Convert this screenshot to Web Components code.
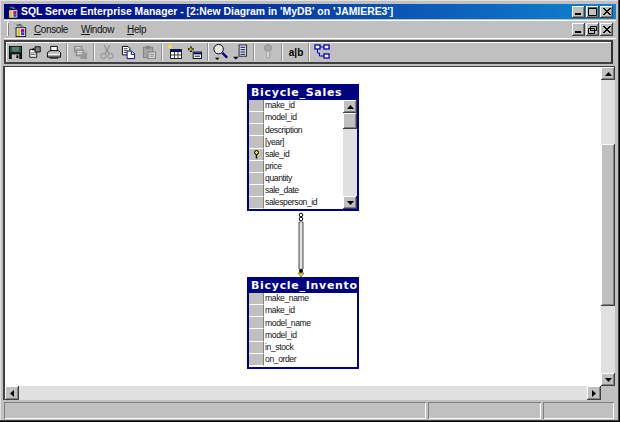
<!DOCTYPE html>
<html>
<head>
<meta charset="utf-8">
<title>SQL Server Enterprise Manager</title>
<style>
  html, body { margin: 0; padding: 0; background: #c0c0c0; }
  body { width: 620px; height: 422px; overflow: hidden; font-family: "Liberation Sans", Arial, sans-serif; }
</style>
</head>
<body>
<app-window>
  <title-bar>SQL Server Enterprise Manager - [2:New Diagram in 'MyDB' on 'JAMIERE3']</title-bar>
  <menu-bar></menu-bar>
  <tool-bar></tool-bar>
  <diagram-view>
    <db-table name="Bicycle_Sales" x="242" y="17" w="112" h="127" scroll>
      <db-col>make_id</db-col>
      <db-col>model_id</db-col>
      <db-col>description</db-col>
      <db-col>[year]</db-col>
      <db-col key>sale_id</db-col>
      <db-col>price</db-col>
      <db-col>quantity</db-col>
      <db-col>sale_date</db-col>
      <db-col>salesperson_id</db-col>
    </db-table>
    <db-table name="Bicycle_Inventory" x="242" y="210" w="112" h="92">
      <db-col>make_name</db-col>
      <db-col>make_id</db-col>
      <db-col>model_name</db-col>
      <db-col>model_id</db-col>
      <db-col>in_stock</db-col>
      <db-col>on_order</db-col>
    </db-table>
    <db-link x="289" y="144"></db-link>
  </diagram-view>
  <status-bar></status-bar>
</app-window>

<script>
// raised win9x button look, shared by scrollbars and caption buttons
const BEVEL = 'background:#c0c0c0;box-shadow:inset -1px -1px #404040,inset 1px 1px #fff,inset -2px -2px #808080;';

const ICONS = {
  app: `<svg width="14" height="15" viewBox="0 0 16 17"><path d="M1 1l4 2 3-1 3 2-2 1-2-1-2 1-1-2z" fill="#555"/><path d="M7 4l6 2" stroke="#888"/><rect x="3.500" y="6.500" width="11" height="10" fill="#fff" stroke="#000"/><rect x="5" y="8" width="3" height="8" fill="#e8c020"/><rect x="9" y="8" width="4" height="4" fill="#b00090"/><rect x="9" y="12" width="4" height="3" fill="#2040c0"/></svg>`,
  save: `<svg width="15" height="15" viewBox="0 0 16 16"><rect x="1" y="1" width="14" height="14" fill="#101010"/><rect x="2" y="2" width="12" height="6" fill="#105050"/><rect x="4" y="2" width="8" height="5" fill="#6a726a"/><rect x="4" y="10" width="8" height="5" fill="#c0c0c0"/><rect x="9" y="11" width="2" height="3" fill="#000"/></svg>`,
  props: `<svg width="14" height="14" viewBox="0 0 16 16"><path d="M2 5h8v9H2z" fill="#fff" stroke="#000"/><path d="M3 9h6M3 11h6" stroke="#555"/><path d="M8 2h6v6H8z" fill="#808080" stroke="#000"/><path d="M4 6l2-3 2 3z" fill="#000"/></svg>`,
  print: `<svg width="16" height="15" viewBox="0 0 17 16"><path d="M5 1.500h7v5H5z" fill="#fff" stroke="#000"/><path d="M1.500 8l3-2h9l2 2v5h-14z" fill="#c0c0c0" stroke="#000"/><path d="M2 10h13" stroke="#fff"/><path d="M2 12h13" stroke="#555"/><path d="M4 14h9" stroke="#000"/></svg>`,
  tables: `<svg width="16" height="15" viewBox="0 0 17 16"><g fill="#b0b0b0" stroke="#888"><rect x="1.500" y="1.500" width="8" height="6"/><rect x="3.500" y="5.500" width="8" height="6"/></g><rect x="8" y="8" width="7" height="7" fill="#989898"/><path d="M3 3h5M5 7h5M5 9h5" stroke="#e0e0e0"/></svg>`,
  cut: `<svg width="14" height="16" viewBox="0 0 14 16"><path d="M4 1l5 9M10 1L5 10" stroke="#909090" stroke-width="1.300" fill="none"/><circle cx="3.500" cy="12" r="2.500" fill="none" stroke="#a0a0a0" stroke-width="1.300"/><circle cx="10.500" cy="12" r="2.500" fill="none" stroke="#a0a0a0" stroke-width="1.300"/></svg>`,
  copy: `<svg width="15" height="15" viewBox="0 0 16 16"><path d="M1.500 1.500h6l2 2v7h-8z" fill="#fff" stroke="#000"/><path d="M3 4h4M3 6h4M3 8h3" stroke="#333"/><path d="M6.500 6.500h5l3 3v5h-8z" fill="#fff" stroke="#000080"/><path d="M11 7v3h3" fill="none" stroke="#000080"/></svg>`,
  paste: `<svg width="15" height="15" viewBox="0 0 16 16"><rect x="1.500" y="2.500" width="10" height="11" fill="#a4a4a4" stroke="#808080"/><rect x="4" y="1" width="5" height="3" fill="#808080"/><rect x="6.500" y="7.500" width="8" height="7" fill="#d8d8d8" stroke="#808080"/><path d="M8 10h5M8 12h5" stroke="#909090"/></svg>`,
  newtable: `<svg width="16" height="16" viewBox="0 0 16 16"><path d="M3 0v5M0.500 2.500h5M1 1l4 3M5 1L1 4" stroke="#f0e040"/><rect x="3.500" y="5.500" width="11" height="9" fill="#fff" stroke="#202020"/><rect x="4" y="6" width="10" height="2" fill="#000080"/><path d="M4 11h10M7.500 8v6M11 8v6" stroke="#404040"/></svg>`,
  addtable: `<svg width="15" height="13" viewBox="0 0 16 14"><path d="M3 0.500v6M0 3.500h6" stroke="#000" stroke-width="2"/><path d="M3 1.500v4M1 3.500h4" stroke="#e8d820"/><rect x="5.500" y="6.500" width="9" height="7" fill="#fff" stroke="#000"/><rect x="6" y="7" width="8" height="2" fill="#000080"/><path d="M7 11h6" stroke="#000"/></svg>`,
  zoom: `<svg width="17" height="18" viewBox="0 0 18 18"><circle cx="7" cy="6" r="5" fill="#e8e8e8" stroke="#000" stroke-width="1"/><path d="M11 10l5 5" stroke="#000080" stroke-width="2.500"/><path d="M3 15h5l-2.500 2.500z" fill="#000"/></svg>`,
  layout: `<svg width="15" height="18" viewBox="0 0 16 18"><rect x="6.500" y="1.500" width="8" height="12" fill="#e0e0e0" stroke="#202020"/><path d="M8 4h5M8 6.500h5M8 9h5M8 11.500h5" stroke="#000080"/><path d="M0 14h6l-3 3z" fill="#000"/></svg>`,
  key: `<svg width="10" height="16" viewBox="0 0 10 16"><circle cx="5" cy="4" r="3.500" fill="#a8a8a8" stroke="#909090"/><path d="M4 7h2v7H4zM6 10h2M6 12h2" fill="#fff" stroke="#a0a0a0"/></svg>`,
  rel: `<svg width="16" height="16" viewBox="0 0 16 16"><g fill="#fff" stroke="#0000c0" stroke-width="1.300"><rect x="1" y="1" width="5" height="4"/><rect x="10" y="1" width="5" height="4"/><rect x="10" y="10" width="5" height="4"/></g><path d="M6 3h4M3.500 5v4h2v3h4.500" fill="none" stroke="#0000c0"/></svg>`
};

function arrow(dir) {
  const pts = { up: '0,4 7,4 3.5,0', down: '0,0 7,0 3.5,4', left: '4,0 4,7 0,3.500', right: '0,0 0,7 4,3.500' }[dir];
  const w = dir === 'up' || dir === 'down' ? 7 : 4;
  const h = dir === 'up' || dir === 'down' ? 4 : 7;
  return `<svg width="${w}" height="${h}" viewBox="0 0 ${w} ${h}"><polygon points="${pts}" fill="#000"/></svg>`;
}

class AppWindow extends HTMLElement {
  constructor() {
    super();
    this.attachShadow({ mode: 'open' });
    this.shadowRoot.innerHTML = `
      <style>
        :host {
          display: flex;
          flex-direction: column;
          box-sizing: border-box;
          width: 620px;
          height: 422px;
          padding: 4px 4px 3px 4px;
          background: #c0c0c0;
          box-shadow: inset -1px -1px #000, inset -2px -2px #404040, inset 1px 1px #e0e0e0;
        }
      </style>
      <slot></slot>`;
  }
}

class TitleBar extends HTMLElement {
  constructor() {
    super();
    this.attachShadow({ mode: 'open' });
    this.shadowRoot.innerHTML = `
      <style>
        :host {
          display: flex;
          align-items: center;
          height: 15px;
          padding: 0 3px 0 2px;
          background: linear-gradient(90deg, #000080 0%, #1084d0 100%);
          color: #fff;
          font: bold 10.4px "Liberation Sans", Arial, sans-serif;
          white-space: nowrap;
        }
        .txt { flex: 1; margin-left: 2px; }
        .ico { display: flex; width: 13px; height: 15px; overflow: hidden; }
        .btn { width: 13px; height: 12px; display: flex; align-items: center; justify-content: center; ${BEVEL} }
        .btn + .btn { margin-left: 1px; }
      </style>
      <span class="ico">${ICONS.app}</span>
      <span class="txt"><slot></slot></span>
      <span class="btn"><svg width="7" height="7"><rect y="5" width="6" height="2"/></svg></span>
      <span class="btn"><svg width="9" height="9"><path d="M.5 1.500h8v7h-8z" fill="none" stroke="#000"/><path d="M0 1h9" stroke="#000"/></svg></span>
      <span class="btn"><svg width="8" height="7"><path d="M0 0l7 7M1 0l7 7M7 0L0 7M8 0L1 7" stroke="#000"/></svg></span>`;
  }
}

class MenuBar extends HTMLElement {
  constructor() {
    super();
    this.attachShadow({ mode: 'open' });
    this.shadowRoot.innerHTML = `
      <style>
        :host {
          display: flex;
          align-items: center;
          height: 19px;
          margin-top: 1px;
          padding: 0 3px 1px 3px;
          box-sizing: border-box;
          font: 10px "Liberation Sans", Arial, sans-serif;
          color: #111;
          box-shadow: inset 0 1px #fff, inset 0 -1px #fff;
        }
        .grip { width: 2px; height: 14px; margin-right: 4px; box-shadow: inset 1px 1px #fff, inset -1px -1px #808080; }
        .app { display: flex; width: 21px; }
        .m { margin-right: 13px; letter-spacing: -.4px; }
        u { text-decoration-thickness: 1px; }
        .sp { flex: 1; }
        .btn { width: 13px; height: 13px; display: flex; align-items: center; justify-content: center; ${BEVEL} }
        .btn + .btn { margin-left: 1px; }
      </style>
      <span class="grip"></span>
      <span class="app">${ICONS.app}</span>
      <span class="m"><u>C</u>onsole</span>
      <span class="m"><u>W</u>indow</span>
      <span class="m"><u>H</u>elp</span>
      <span class="sp"></span>
      <span class="btn"><svg width="7" height="7"><rect y="5" width="6" height="2"/></svg></span>
      <span class="btn"><svg width="9" height="9"><path d="M2.500 1.500h6v4h-6zM.5 3.500h6v5h-6z" fill="#c0c0c0" stroke="#000"/></svg></span>
      <span class="btn"><svg width="8" height="7"><path d="M0 0l7 7M1 0l7 7M7 0L0 7M8 0L1 7" stroke="#000"/></svg></span>`;
  }
}

class ToolBar extends HTMLElement {
  constructor() {
    super();
    this.attachShadow({ mode: 'open' });
    const layout = ['save', 'props', 'print', 8, 'tables', 6, 'cut', 1, 'copy', 1, 'paste', 6, 'newtable', 'addtable', 5, 'zoom', 'layout', 8, 'key', 8, 'alb', 6, 'rel'];
    const items = layout.map((it, i) => {
      if (typeof it === 'number') return it === 1 ? '<i class="gap"></i>' : `<i class="sep" style="width:${it}px"></i>`;
      if (it === 'alb') return '<b class="ic alb">a|b</b>';
      return `<span class="ic${i < 3 ? ' first' : ''}">${ICONS[it]}</span>`;
    }).join('');
    this.shadowRoot.innerHTML = `
      <style>
        :host {
          display: flex;
          align-items: center;
          box-sizing: border-box;
          height: 24px;
          margin: 1px 3px 0 0;
          border: 2px solid #404040;
          border-right-color: #303030;
          box-shadow: inset 1px 1px #fff;
        }
        .ic { display: flex; align-items: center; justify-content: center; width: 20px; height: 18px; }
        .ic.first { width: 19px; }
        .ic svg { filter: blur(.3px); }
        .alb { font: bold 10px "Liberation Sans", Arial, sans-serif; color: #000; }
        .gap { width: 1px; }
        .sep { display: block; height: 18px; }
        .sep::after { content: ""; display: block; width: 2px; height: 18px; margin: 0 auto; box-shadow: inset 1px 0 #909090, inset -1px 0 #f4f4f4; }
      </style>
      ${items}`;
  }
}

class DiagramView extends HTMLElement {
  constructor() {
    super();
    this.attachShadow({ mode: 'open' });
    this.shadowRoot.innerHTML = `
      <style>
        :host {
          display: grid;
          grid-template-columns: 1fr 14px;
          grid-template-rows: 1fr 14px;
          height: 334px;
          margin: 2px 1px 0 -1px;
          box-shadow: inset 2px 1px #404040;
          padding: 1px 0 0 2px;
          box-sizing: border-box;
        }
        .canvas { position: relative; background: #fff; overflow: hidden; }
        .corner { background: #c0c0c0; }
      </style>
      <div class="canvas"><slot></slot></div>
      <sb-bar dir="v"></sb-bar>
      <sb-bar dir="h"></sb-bar>
      <div class="corner"></div>`;
  }
}

class SbBar extends HTMLElement {
  constructor() {
    super();
    this.attachShadow({ mode: 'open' });
  }
  connectedCallback() {
    const v = this.getAttribute('dir') === 'v';
    this.shadowRoot.innerHTML = `
      <style>
        :host { display: flex; flex-direction: ${v ? 'column' : 'row'}; background: #e0e0e0; }
        .b { flex: none; width: 14px; height: ${v ? 13 : 14}px; display: flex; align-items: center; justify-content: center; ${BEVEL} }
        .track { flex: 1; display: flex; flex-direction: column; }
        .sp1 { height: 64px; }
        .thumb { height: 162px; ${BEVEL} }
      </style>
      <span class="b">${arrow(v ? 'up' : 'left')}</span>
      <div class="track">${v ? '<div class="sp1"></div><div class="thumb"></div>' : ''}</div>
      <span class="b">${arrow(v ? 'down' : 'right')}</span>`;
  }
}

class DbTable extends HTMLElement {
  constructor() {
    super();
    this.attachShadow({ mode: 'open' });
  }
  connectedCallback() {
    const a = n => this.getAttribute(n);
    this.style.left = a('x') + 'px';
    this.style.top = a('y') + 'px';
    this.style.width = a('w') + 'px';
    this.style.height = a('h') + 'px';
    const scroll = this.hasAttribute('scroll');
    this.shadowRoot.innerHTML = `
      <style>
        :host {
          position: absolute;
          display: flex;
          flex-direction: column;
          box-sizing: border-box;
          border: 2px solid #000080;
          background: #000080;
        }
        .head {
          height: 14px;
          padding-left: 2px;
          color: #fff;
          font: bold 11px/14px "DejaVu Sans", sans-serif;
          letter-spacing: .7px;
          white-space: nowrap;
          overflow: hidden;
          flex: none;
        }
        .body { flex: 1; display: flex; background: #fff; min-height: 0; }
        .cols { flex: 1; overflow: hidden; }
        .sb { flex: none; width: 14px; display: flex; flex-direction: column; background: #e0e0e0; }
        .b { height: 13px; display: flex; align-items: center; justify-content: center; ${BEVEL} }
        .th { height: 16px; ${BEVEL} }
        .tr { flex: 1; }
      </style>
      <div class="head">${a('name')}</div>
      <div class="body">
        <div class="cols"><slot></slot></div>
        ${scroll ? `<div class="sb"><span class="b">${arrow('up')}</span><div class="th"></div><div class="tr"></div><span class="b">${arrow('down')}</span></div>` : ''}
      </div>`;
  }
}

class DbCol extends HTMLElement {
  constructor() {
    super();
    this.attachShadow({ mode: 'open' });
    this.shadowRoot.innerHTML = `
      <style>
        :host { display: flex; box-sizing: border-box; height: 12.15px; padding-bottom: 1.5px; align-items: center; font: 8.6px "Liberation Sans", Arial, sans-serif; letter-spacing: -.4px; color: #111; }
        .sel { flex: none; align-self: flex-start; display: flex; align-items: center; justify-content: center; width: 15px; height: 12.15px; margin-right: 1px; background: #c0c0c0; box-sizing: border-box; border-right: 1px solid #808080; border-bottom: 1px solid #fff; }
      </style>
      <span class="sel"></span><slot></slot>`;
  }
  connectedCallback() {
    if (this.hasAttribute('key')) {
      this.shadowRoot.querySelector('.sel').innerHTML = `<svg width="7" height="9" viewBox="0 0 7 9"><circle cx="3.500" cy="2.500" r="2" fill="#f0e020" stroke="#000" stroke-width="1"/><path d="M3.500 4.500V8.500" stroke="#000" stroke-width="1.500"/><path d="M4 6h2" stroke="#f0e020"/></svg>`;
    }
  }
}

class DbLink extends HTMLElement {
  constructor() {
    super();
    this.attachShadow({ mode: 'open' });
  }
  connectedCallback() {
    this.style.left = this.getAttribute('x') + 'px';
    this.style.top = this.getAttribute('y') + 'px';
    this.shadowRoot.innerHTML = `
      <style>:host { position: absolute; display: block; width: 14px; height: 68px; }</style>
      <svg width="14" height="68" viewBox="0 0 14 68">
        <circle cx="7" cy="4" r="1.800" fill="#fff" stroke="#000"/>
        <circle cx="7" cy="8" r="1.800" fill="#fff" stroke="#000"/>
        <path d="M5 11h4v47H5z" fill="#c8c8c8" stroke="#505050"/>
        <path d="M7 11v47" stroke="#fff"/>
        <circle cx="7" cy="60" r="2" fill="#000"/>
        <path d="M4 62h6L7 66z" fill="#f0e020" stroke="#404000" stroke-width=".6"/>
      </svg>`;
  }
}

class StatusBar extends HTMLElement {
  constructor() {
    super();
    this.attachShadow({ mode: 'open' });
    this.shadowRoot.innerHTML = `
      <style>
        :host { display: grid; grid-template-columns: 422px 113px 71px; column-gap: 2px; height: 17px; margin: 2px 3px 0 0; }
        span { box-shadow: inset 1px 1px #808080, inset -1px -1px #fff; }
      </style>
      <span></span><span></span><span></span>`;
  }
}

customElements.define('app-window', AppWindow);
customElements.define('title-bar', TitleBar);
customElements.define('menu-bar', MenuBar);
customElements.define('tool-bar', ToolBar);
customElements.define('diagram-view', DiagramView);
customElements.define('sb-bar', SbBar);
customElements.define('db-table', DbTable);
customElements.define('db-col', DbCol);
customElements.define('db-link', DbLink);
customElements.define('status-bar', StatusBar);
</script>
</body>
</html>
